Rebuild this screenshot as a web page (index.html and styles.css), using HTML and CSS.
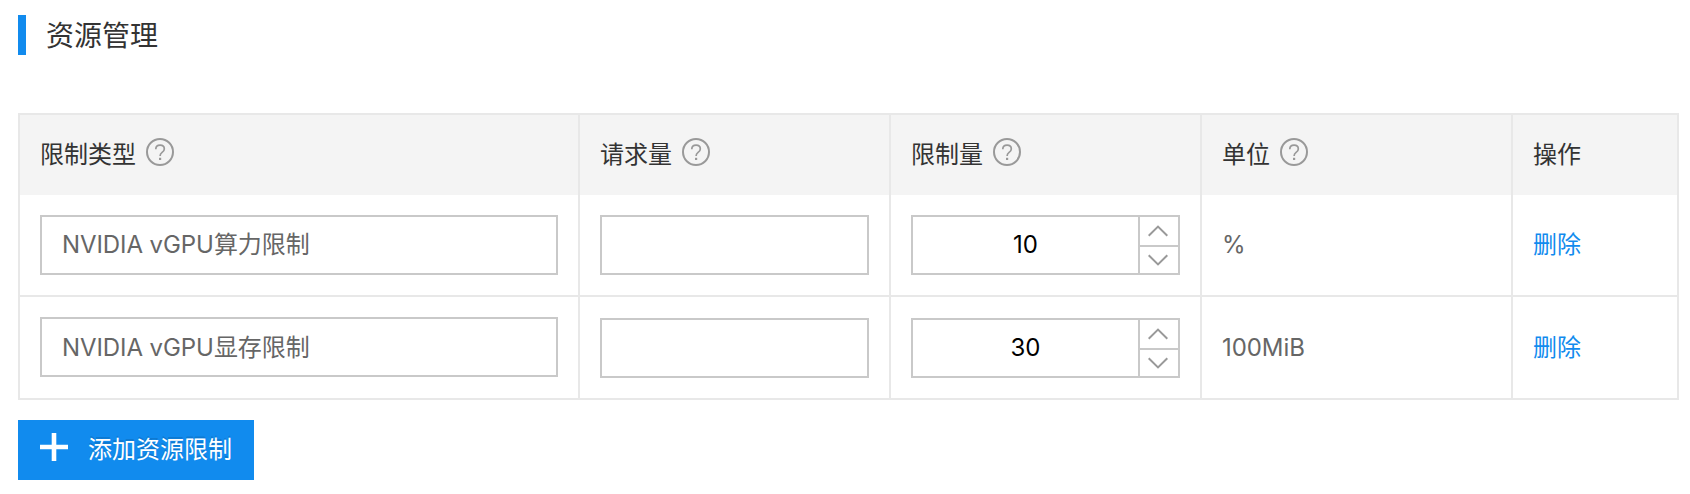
FILE: index.html
```html
<!DOCTYPE html>
<html lang="zh-CN">
<head>
<meta charset="utf-8">
<title>资源管理</title>
<link rel="stylesheet" href="styles.css">
</head>
<body>
<svg class="defs" aria-hidden="true">
  <symbol id="help" viewBox="0 0 28 28">
    <circle cx="14" cy="14" r="13" fill="none" stroke="#999" stroke-width="2"/>
    <path d="M9.8 11.2C9.8 8.7 11.6 7.2 14.1 7.2C16.5 7.2 18.3 8.7 18.3 10.9C18.3 12.6 17.4 13.4 16.1 14.4C14.7 15.5 14.1 16.2 14.1 17.9" fill="none" stroke="#999" stroke-width="1.7"/>
    <rect x="13" y="19.8" width="2.2" height="2.2" fill="#999"/>
  </symbol>
  <symbol id="up" viewBox="0 0 20 12">
    <path d="M.7 10.8L10 1.6L19.3 10.8" fill="none" stroke="#999" stroke-width="2"/>
  </symbol>
  <symbol id="down" viewBox="0 0 20 12">
    <path d="M.7 1.2L10 10.4L19.3 1.2" fill="none" stroke="#999" stroke-width="2"/>
  </symbol>
</svg>
<main class="panel">
  <h1 class="title">资源管理</h1>
  <div class="table">
    <div class="row head">
      <div class="cell"><span>限制类型</span><svg class="help"><use href="#help"/></svg></div>
      <div class="cell"><span>请求量</span><svg class="help"><use href="#help"/></svg></div>
      <div class="cell"><span>限制量</span><svg class="help"><use href="#help"/></svg></div>
      <div class="cell"><span>单位</span><svg class="help"><use href="#help"/></svg></div>
      <div class="cell"><span>操作</span></div>
    </div>
    <div class="row first">
      <div class="cell"><div class="field"><span class="latin">NVIDIA vGPU</span>算力限制</div></div>
      <div class="cell"><div class="field"></div></div>
      <div class="cell"><div class="number"><span class="value">10</span><div class="steps"><span class="step"><svg><use href="#up"/></svg></span><span class="step"><svg><use href="#down"/></svg></span></div></div></div>
      <div class="cell"><span class="unit">%</span></div>
      <div class="cell"><a class="link">删除</a></div>
    </div>
    <div class="row second">
      <div class="cell"><div class="field"><span class="latin">NVIDIA vGPU</span>显存限制</div></div>
      <div class="cell"><div class="field"></div></div>
      <div class="cell"><div class="number"><span class="value">30</span><div class="steps"><span class="step"><svg><use href="#up"/></svg></span><span class="step"><svg><use href="#down"/></svg></span></div></div></div>
      <div class="cell"><span class="unit">100MiB</span></div>
      <div class="cell"><a class="link">删除</a></div>
    </div>
  </div>
  <button class="add"><svg class="plus" viewBox="0 0 28 28"><path d="M14 0V28M0 14H28" stroke="#fff" stroke-width="4.6"/></svg><span>添加资源限制</span></button>
</main>
</body>
</html>
```
FILE: styles.css
```css
* { box-sizing: border-box; }
body {
  margin: 0;
  background: #fff;
  color: #333;
  font: 24px/36px Inter, "Noto Sans CJK SC", sans-serif;
}
.defs { display: none; }
.panel { padding: 15px 11px 0 18px; }
.title {
  margin: 0 0 58px;
  height: 40px;
  padding: 1px 0 0 20px;
  border-left: 8px solid #118bee;
  font-size: 28px;
  font-weight: 400;
  line-height: 40px;
}
.table { border: 2px solid #e8e8e8; }
.row {
  display: grid;
  grid-template-columns: 560px 311px 311px 311px 164px;
}
.cell {
  display: flex;
  align-items: center;
  padding: 0 20px;
  border-right: 2px solid #e8e8e8;
}
.cell:last-child { border-right: 0; }
.head { height: 80px; background: #f4f4f4; }
.head .cell { gap: 10px; }
.help { width: 28px; height: 28px; margin-top: -6px; }
.first { height: 102px; border-bottom: 2px solid #e8e8e8; }
.second { height: 101px; }
.second .cell { padding-top: 1px; }
.second .cell:first-child { padding-top: 0; padding-bottom: 1px; }
.second .cell:first-child .field { padding-top: 2px; }
.field {
  display: flex;
  align-items: center;
  width: 100%;
  height: 60px;
  padding: 0 20px;
  border: 2px solid #c9c9c9;
  color: #666;
}
.latin { white-space: pre; letter-spacing: -.08px; font-weight: 380; }
.number {
  display: flex;
  width: 100%;
  height: 60px;
  border: 2px solid #c9c9c9;
  color: #000;
}
.value {
  flex: 1;
  text-align: center;
  line-height: 56px;
  font-weight: 380;
}
.steps { flex: none; width: 40px; border-left: 2px solid #c9c9c9; }
.step {
  display: flex;
  align-items: center;
  justify-content: center;
  height: 26px;
  padding-right: 2px;
}
.step:first-child { height: 30px; border-bottom: 2px solid #c9c9c9; }
.step svg { width: 20px; height: 12px; }
.unit { color: #666; font-weight: 380; letter-spacing: -.08px; }
.link { color: #118bee; }
.add {
  display: flex;
  align-items: center;
  gap: 20px;
  width: 236px;
  height: 60px;
  margin-top: 20px;
  padding: 0 22px;
  border: 0;
  background: #118bee;
  box-shadow: 0 4px 0 #f5f5f5;
  color: #fff;
  font: inherit;
  white-space: nowrap;
  text-shadow: 0 -2px 0 rgba(0, 0, 0, .12);
}
.plus { flex: none; width: 28px; height: 28px; margin-top: -6px; }
```
